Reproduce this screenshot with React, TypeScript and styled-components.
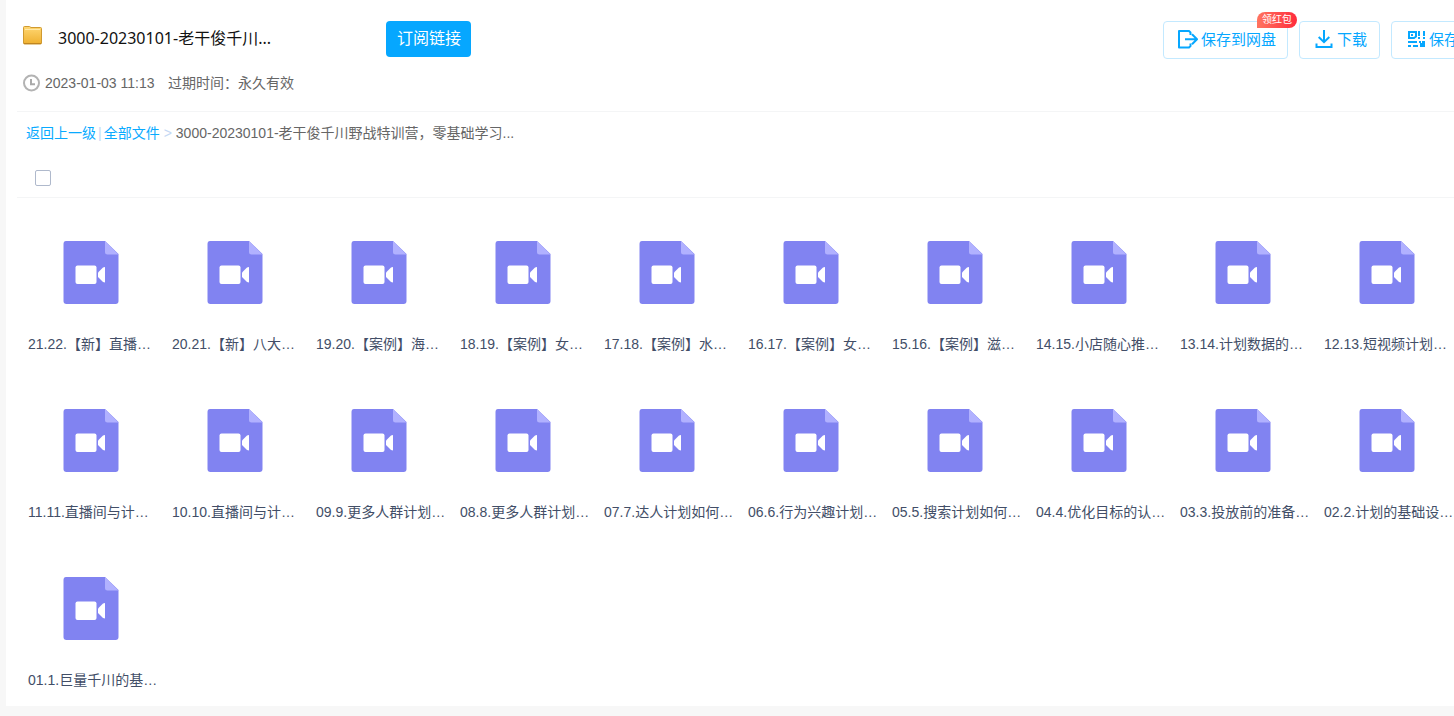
import React from "react";
import styled, { createGlobalStyle } from "styled-components";

const GlobalStyle = createGlobalStyle`
  * { box-sizing: border-box; }
  body {
    margin: 0;
    background: #f7f7f7;
    font-family: "Liberation Sans", "Noto Sans CJK SC", sans-serif;
    font-size: 14px;
    line-height: 20px;
    color: #666;
  }
`;

const Page = styled.div`
  overflow: hidden;
  padding: 0 0 10px 6px;
`;

const Panel = styled.main`
  background: #fff;
  padding: 21px 0 16px 11px;
`;

const Header = styled.header`
  padding-left: 6px;
  border-bottom: 1px solid #f4f5f6;
`;

const TitleRow = styled.div`
  display: flex;
  align-items: flex-start;
  height: 38px;
`;

const FolderSvg = styled.svg`
  flex: none;
  margin-top: 5px;
`;

const Title = styled.h1`
  flex: 0 0 328px;
  margin: 0 0 0 16px;
  font-family: "Noto Sans", "Noto Sans CJK SC", sans-serif;
  font-size: 16px;
  font-weight: 400;
  line-height: 34px;
  color: #111;
`;

const SubscribeButton = styled.button`
  flex: none;
  height: 36px;
  padding: 0 10px 0 11px;
  border: 0;
  border-radius: 4px;
  background: #06a7ff;
  color: #fff;
  font: inherit;
  font-size: 16px;
`;

const Actions = styled.div`
  display: flex;
  gap: 11px;
  margin-left: auto;
  margin-right: -62px;
`;

const ActionButton = styled.button<{ $wide?: boolean }>`
  position: relative;
  display: flex;
  flex: none;
  align-items: center;
  gap: 3px;
  width: ${(p) => (p.$wide ? "125px" : "81px")};
  height: 38px;
  padding: 0 0 0 14px;
  border: 1px solid #c3e9ff;
  border-radius: 4px;
  background: #fff;
  color: #06a7ff;
  font: inherit;
  font-size: 15px;
  white-space: nowrap;
`;

const Badge = styled.span`
  position: absolute;
  top: -10px;
  right: -10px;
  height: 16px;
  padding: 0 5px;
  border-radius: 8px 8px 8px 0;
  background: linear-gradient(90deg, #ff7460, #ff2c3c);
  color: #fff;
  font-size: 10px;
  line-height: 16px;
`;

const MetaRow = styled.div`
  display: flex;
  align-items: center;
  height: 52px;
  padding-bottom: 4px;
`;

const MetaDate = styled.time`
  flex: 0 0 123px;
  margin-left: 4px;
  white-space: nowrap;
`;

const Crumbs = styled.nav`
  display: flex;
  align-items: center;
  height: 42px;
  padding-left: 9px;
`;

const CrumbLink = styled.a`
  color: #09aaff;
  text-decoration: none;
`;

const Divider = styled.span<{ $gap: number }>`
  padding: 0 ${(p) => p.$gap}px;
  color: #c4d8f4;
`;

const SelectBar = styled.div`
  display: flex;
  align-items: center;
  height: 44px;
  padding: 5px 0 0 18px;
  border-bottom: 1px solid #f4f5f6;
`;

const Checkbox = styled.input`
  appearance: none;
  width: 16px;
  height: 16px;
  margin: 0;
  border: 1px solid #afb9cc;
  border-radius: 2px;
  background: #fff;
`;

const FileGrid = styled.ul`
  display: grid;
  grid-template-columns: repeat(auto-fill, 144px);
  row-gap: 55px;
  margin: 43px -6px 0 2px;
  padding: 0;
  list-style: none;
`;

const FileTile = styled.li`
  display: flex;
  flex-direction: column;
  gap: 29px;
  padding-left: 9px;
  color: #424e67;

  svg { margin-left: 35px; }
`;

const FileName = styled.span`
  white-space: nowrap;
`;

const FolderIcon = () => (
  <FolderSvg width="19" height="19" viewBox="0 0 19 19" aria-hidden="true">
    <defs>
      <linearGradient id="folder" x1="0" y1="0" x2="0" y2="1">
        <stop offset="0" stopColor="#ffd773" />
        <stop offset="1" stopColor="#efb02f" />
      </linearGradient>
    </defs>
    <path d="M.5 1.5Q.5.5 1.5.5h5l1.5 1h9.5q1 0 1 1V17q0 1-1 1h-16q-1 0-1-1Z" fill="url(#folder)" stroke="#d09a30" />
    <path d="M2 3.5h15" stroke="#ffe9a8" />
    <path d="M1 17.5h17" stroke="#bf8521" />
  </FolderSvg>
);

const ClockIcon = () => (
  <svg width="18" height="18" viewBox="0 0 18 18" fill="none" aria-hidden="true">
    <circle cx="8.5" cy="9" r="7.5" stroke="#b3b3b3" strokeWidth="2" />
    <path d="M8 5v5.3h4" stroke="#aaa" strokeWidth="2" />
  </svg>
);

const SaveIcon = () => (
  <svg width="20" height="20" viewBox="0 0 20 20" fill="none" stroke="#06a7ff" strokeWidth="2" aria-hidden="true">
    <path d="M12.500 5V2.500L11 1H1v16.500h10l1.500-1.500v-2.500" strokeLinejoin="round" />
    <path d="M7 9.200h12M14 4.200l5 5-5 5" strokeLinejoin="round" />
  </svg>
);

const DownloadIcon = () => (
  <svg width="20" height="20" viewBox="0 0 20 20" fill="none" stroke="#06a7ff" strokeWidth="2" aria-hidden="true">
    <path d="M10 0v12M4.700 7l5.300 5.200L15.300 7M2.500 13.500V17h15v-3.500" />
  </svg>
);

const QrIcon = () => (
  <svg width="20" height="20" viewBox="0 1 20 20" fill="none" stroke="#06a7ff" strokeWidth="2" aria-hidden="true">
    <path d="M3 3h7v4.500L8 9H3ZM6 5v2M13 2v5M13 8v2M18 2v5M18 8v2M2 13h9M2 17h3M7 17h5M13 13h2" />
    <path d="M14 14h5v4h-5ZM16 12h3v3h-3Z" fill="#06a7ff" stroke="none" />
  </svg>
);

const VideoFileIcon = () => (
  <svg width="56" height="64" viewBox="0 0 56 64" aria-hidden="true">
    <path d="M3 0h39l13.500 13v47q0 3-3 3H3.500q-3 0-3-3V3q0-3 2.500-3Z" fill="#8183f1" />
    <path d="M42 0l13.500 13.500H44.500q-2.500 0-2.500-2.500Z" fill="#b1b1ff" />
    <rect x="12.500" y="24.500" width="21" height="18.500" rx="2" fill="#fff" />
    <path d="M42 26v15.500l-2-.5-5-5v-4.500l5-5Z" fill="#fff" />
  </svg>
);

const files = [
  "21.22.【新】直播…",
  "20.21.【新】八大…",
  "19.20.【案例】海…",
  "18.19.【案例】女…",
  "17.18.【案例】水…",
  "16.17.【案例】女…",
  "15.16.【案例】滋…",
  "14.15.小店随心推…",
  "13.14.计划数据的…",
  "12.13.短视频计划…",
  "11.11.直播间与计…",
  "10.10.直播间与计…",
  "09.9.更多人群计划…",
  "08.8.更多人群计划…",
  "07.7.达人计划如何…",
  "06.6.行为兴趣计划…",
  "05.5.搜索计划如何…",
  "04.4.优化目标的认…",
  "03.3.投放前的准备…",
  "02.2.计划的基础设…",
  "01.1.巨量千川的基…",
];

export default function App() {
  return (
    <>
      <GlobalStyle />
      <Page>
        <Panel>
          <Header>
            <TitleRow>
              <FolderIcon />
              <Title>3000-20230101-老干俊千川...</Title>
              <SubscribeButton>订阅链接</SubscribeButton>
              <Actions>
                <ActionButton $wide>
                  <SaveIcon />
                  保存到网盘
                  <Badge>领红包</Badge>
                </ActionButton>
                <ActionButton>
                  <DownloadIcon />
                  下载
                </ActionButton>
                <ActionButton $wide>
                  <QrIcon />
                  保存
                </ActionButton>
              </Actions>
            </TitleRow>
            <MetaRow>
              <ClockIcon />
              <MetaDate>2023-01-03 11:13</MetaDate>
              <span>过期时间：永久有效</span>
            </MetaRow>
          </Header>
          <Crumbs>
            <CrumbLink href="#up">返回上一级</CrumbLink>
            <Divider $gap={2}>|</Divider>
            <CrumbLink href="#all">全部文件</CrumbLink>
            <Divider $gap={4}>&gt;</Divider>
            <span>3000-20230101-老干俊千川野战特训营，零基础学习...</span>
          </Crumbs>
          <SelectBar>
            <Checkbox type="checkbox" aria-label="全选" />
          </SelectBar>
          <FileGrid>
            {files.map((name) => (
              <FileTile key={name}>
                <VideoFileIcon />
                <FileName>{name}</FileName>
              </FileTile>
            ))}
          </FileGrid>
        </Panel>
      </Page>
    </>
  );
}
